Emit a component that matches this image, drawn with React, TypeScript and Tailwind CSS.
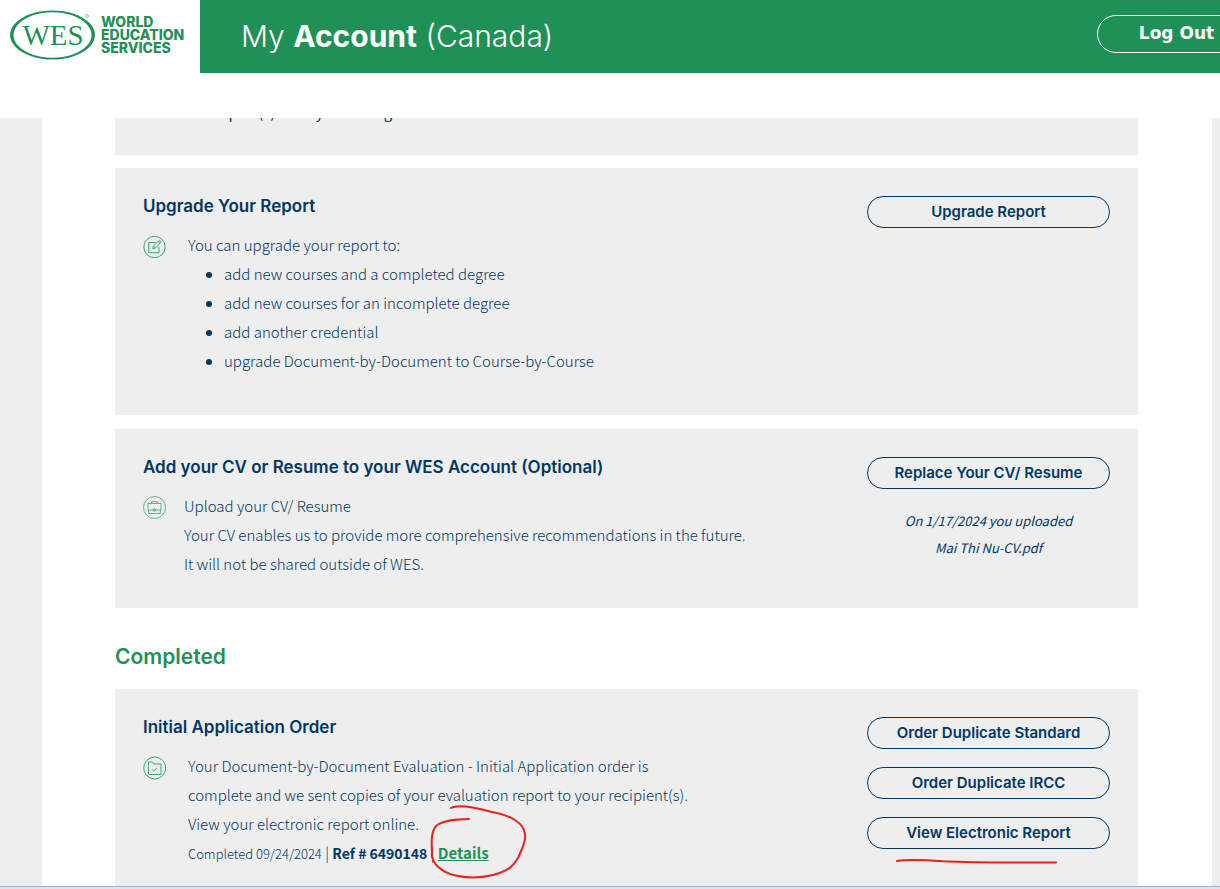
import React from "react";

const bodyFont = "font-['Noto_Sans_CJK_SC',sans-serif]";
const headingFont = "font-['Inter',sans-serif]";

const Logo = () => (
  <a
    href="#"
    className="flex w-[200px] shrink-0 items-center gap-1 bg-white pb-1 pl-2.5 text-[#1f9157]"
  >
    <svg width="87" height="52" viewBox="0 0 87 52" aria-hidden="true">
      {/* Outer and inner ellipse form the thick-thin ring */}
      <path
        fillRule="evenodd"
        fill="currentColor"
        d="M42.500 1.500a42.500 24.500 0 1 0 .01 0ZM42.500 3.300a39 22.700 0 1 1-.01 0Z"
      />
      <text
        x="43"
        y="36"
        textAnchor="middle"
        fontSize="29"
        fill="currentColor"
        fontFamily="Liberation Serif, serif"
      >
        WES
      </text>
      <circle cx="77" cy="7" r="1.500" fill="none" stroke="currentColor" strokeWidth=".5" />
    </svg>
    <span className="font-['Inter',sans-serif] text-sm leading-[13px] font-extrabold">
      WORLD
      <br />
      EDUCATION
      <br />
      SERVICES
    </span>
  </a>
);

const Header = () => (
  <header className="flex h-[73px] shrink-0 overflow-hidden bg-[#1f9157] text-white">
    <Logo />
    <h1
      className={`${headingFont} shrink-0 self-center pb-0.5 pl-[41px] text-3xl leading-9 font-light whitespace-nowrap`}
    >
      My <b className="font-bold">Account</b> (Canada)
    </h1>
    <button className="-mr-9 mt-[15px] ml-auto h-[38px] w-[159px] shrink-0 rounded-full border border-white font-['DejaVu_Sans',sans-serif] text-[17px] font-bold">
      Log Out
    </button>
  </header>
);

const EditIcon = () => (
  <svg
    width="24"
    height="24"
    viewBox="0 0 24 24"
    fill="none"
    stroke="#3fa56f"
    className="mt-[5px] shrink-0"
    aria-hidden="true"
  >
    <circle cx="11.500" cy="12" r="10.700" />
    <path d="M12.500 7.500H5.800v10.200H16v-6" />
    <path d="m9.700 13.700.7-2.800 6.100-5.600 1.700 1.700-5.800 6.100-2.700.6Z" />
    <path d="m10.700 11.200 1.500 1.600M15.300 6.500l1.600 1.700" />
  </svg>
);

const BriefcaseIcon = () => (
  <svg
    width="24"
    height="24"
    viewBox="0 0 24 24"
    fill="none"
    stroke="#3fa56f"
    strokeWidth=".8"
    className="mt-[5px] shrink-0"
    aria-hidden="true"
  >
    <circle cx="11.500" cy="11.500" r="11" />
    <path d="M5 7.500h13v6.500H5zM5.700 14v3.500h11.600V14" />
    <path d="M8.700 7.300V5.500h5.600v1.800" />
    <circle cx="11.500" cy="14" r="1.300" />
  </svg>
);

const FolderIcon = () => (
  <svg
    width="24"
    height="24"
    viewBox="0 0 24 24"
    fill="none"
    stroke="#3fa56f"
    className="mt-[5px] shrink-0"
    aria-hidden="true"
  >
    <circle cx="11.700" cy="12" r="11" />
    <path d="M5.500 18V6h4l1.500 2h7v10.500H5.500" />
    <path d="m9.300 13.700 1.500 1.400 3.200-3.200" />
  </svg>
);

const ActionButton = ({ children }: { children: React.ReactNode }) => (
  <button
    className={`${headingFont} h-8 w-full rounded-full border border-[#003764] pb-0.5 text-[15px] font-semibold text-[#003764]`}
  >
    {children}
  </button>
);

type CardProps = {
  title: string;
  icon: React.ReactNode;
  textClass?: string;
  actions: React.ReactNode;
  children: React.ReactNode;
};

const Card = ({ title, icon, textClass = "pl-[21px]", actions, children }: CardProps) => (
  <section className="flex justify-between gap-8 bg-[#eee] px-7 pt-7 pb-[30px]">
    <div className="min-w-0">
      <h3 className={`${headingFont} mb-3.5 text-[17px] leading-5 font-semibold`}>{title}</h3>
      <div className="flex">
        {icon}
        <div className={textClass}>{children}</div>
      </div>
    </div>
    <div className="flex w-[243px] shrink-0 flex-col gap-[18px]">{actions}</div>
  </section>
);

const App = () => {
  return (
    <div className={`${bodyFont} flex h-screen flex-col overflow-hidden bg-white text-[#003764]`}>
      <Header />

      <main className="mt-[45px] min-h-0 flex-1 overflow-hidden bg-[#eee] pr-2 pl-[42px] text-[15px] leading-[29px] font-light">
        <div className="flex flex-col gap-3.5 bg-white pr-[74px] pl-[73px]">
          {/* Tail of the previous card, scrolled under the header */}
          <section className="-mb-px overflow-hidden bg-[#eee] pb-[29px] pl-[73px]">
            <p className="-mt-[21px] font-normal">the report(s) from your college</p>
          </section>

          <Card
            title="Upgrade Your Report"
            icon={<EditIcon />}
            actions={<ActionButton>Upgrade Report</ActionButton>}
          >
            <p>You can upgrade your report to:</p>
            <ul className="mb-2.5 list-disc pl-9">
              <li>add new courses and a completed degree</li>
              <li>add new courses for an incomplete degree</li>
              <li>add another credential</li>
              <li>upgrade Document-by-Document to Course-by-Course</li>
            </ul>
          </Card>

          <Card
            title="Add your CV or Resume to your WES Account (Optional)"
            icon={<BriefcaseIcon />}
            textClass="pl-[17px]"
            actions={
              <>
                <ActionButton>Replace Your CV/ Resume</ActionButton>
                <p className="text-center text-[13px] leading-[27px] font-normal italic">
                  On 1/17/2024 you uploaded
                  <br />
                  Mai Thi Nu-CV.pdf
                </p>
              </>
            }
          >
            <p>Upload your CV/ Resume</p>
            <p>Your CV enables us to provide more comprehensive recommendations in the future.</p>
            <p>It will not be shared outside of WES.</p>
          </Card>

          <h2
            className={`${headingFont} mt-[22px] mb-[5px] text-[21px] leading-[26px] font-semibold text-[#1f9157]`}
          >
            Completed
          </h2>

          <Card
            title="Initial Application Order"
            icon={<FolderIcon />}
            actions={
              <>
                <ActionButton>Order Duplicate Standard</ActionButton>
                <ActionButton>Order Duplicate IRCC</ActionButton>
                <div className="relative">
                  <ActionButton>View Electronic Report</ActionButton>
                  <svg
                    className="pointer-events-none absolute top-10 left-7"
                    width="164"
                    height="8"
                    viewBox="0 0 164 8"
                    fill="none"
                    stroke="#e8211d"
                    strokeWidth="2"
                    strokeLinecap="round"
                    aria-hidden="true"
                  >
                    <path d="M2 4c10-1.500 28-1 46 .3C82 6 120 5.500 161 5.500" />
                  </svg>
                </div>
              </>
            }
          >
            <p>
              Your Document-by-Document Evaluation - Initial Application order is
              <br />
              complete and we sent copies of your evaluation report to your recipient(s).
            </p>
            <p>View your electronic report online.</p>
            <p>
              <span className="text-[13px]">Completed 09/24/2024</span> |{" "}
              <b className="text-sm leading-[29px] font-bold">Ref # 6490148</b> |{" "}
              <span className="relative">
                <a href="#" className="text-[15px] font-bold text-[#1f9157] underline">
                  Details
                </a>
                <svg
                  className="pointer-events-none absolute -top-[38px] -left-2"
                  width="98"
                  height="76"
                  viewBox="0 0 98 76"
                  fill="none"
                  stroke="#e8211d"
                  strokeWidth="2"
                  strokeLinecap="round"
                  aria-hidden="true"
                >
                  <path d="M39 15C27 15 12 17 6 22 0 29 2 42 2 53c3 11 15 17 26 19 15 3 27 1 35-1 16-4 21-10 25-17 5-11 8-18 7-24C94 19 80 11 62 8 44 3 28 0 21 4" />
                </svg>
              </span>
            </p>
          </Card>
        </div>
      </main>

      <footer className="h-[3px] shrink-0 border-t border-[#a5b0c4] bg-[#dbe4f6]" />
    </div>
  );
};

export default App;
